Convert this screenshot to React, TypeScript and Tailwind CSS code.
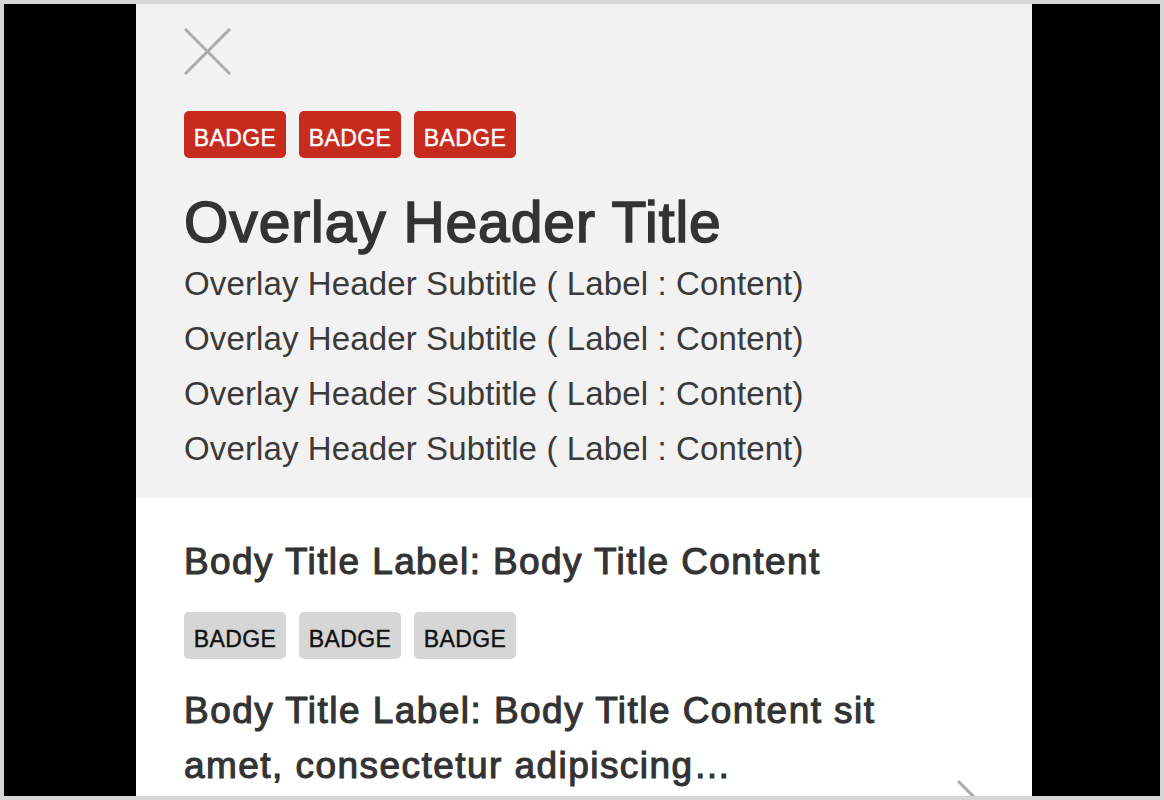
import React from "react";

const font = { fontFamily: '"Liberation Sans", Arial, Helvetica, sans-serif' };

const subtitles = [1, 2, 3, 4].map(() => "Overlay Header Subtitle ( Label : Content)");

const Badge = ({ tone }: { tone: "red" | "gray" }) => (
  <span
    className={
      tone === "red"
        ? "w-[102px] h-[47px] pt-[7px] flex items-center justify-center rounded-[5px] bg-[#c62b1d] text-white text-[23px] tracking-[0.4px] leading-none [-webkit-text-stroke:0.4px_#fff]"
        : "w-[102px] h-[47px] pt-[7px] flex items-center justify-center rounded-[5px] bg-[#d6d6d6] text-[#111] text-[23px] tracking-[0.4px] leading-none [-webkit-text-stroke:0.4px_#111]"
    }
  >
    BADGE
  </span>
);

const BadgeRow = ({ tone }: { tone: "red" | "gray" }) => (
  <div className="flex gap-[13px]">
    <Badge tone={tone} />
    <Badge tone={tone} />
    <Badge tone={tone} />
  </div>
);

const App = () => {
  return (
    <div
      className="w-[1164px] h-[800px] border-4 border-[#d6d6d6] bg-black overflow-hidden"
      style={font}
    >
      <div className="ml-[132px] w-[896px] h-full bg-white overflow-hidden">
        {/* header */}
        <div className="bg-[#f2f2f2] pl-[48px] pt-[24px] pb-[22px]">
          <button className="block w-[47px] h-[47px]">
            <svg width="47" height="47" viewBox="0 0 47 47">
              <path d="M1 1 L46 46 M46 1 L1 46" stroke="#ababab" strokeWidth="3" fill="none" />
            </svg>
          </button>
          <div className="mt-[36px]">
            <BadgeRow tone="red" />
          </div>
          <h1 className="mt-[33px] text-[57px] leading-[62px] tracking-[0.9px] text-[#333] [-webkit-text-stroke:1.6px_#333]">
            Overlay Header Title
          </h1>
          <div className="mt-[3px] text-[33px] leading-[55px] tracking-[0.12px] text-[#3a3a3a]">
            {subtitles.map((s, i) => (
              <div key={i}>{s}</div>
            ))}
          </div>
        </div>

        {/* body */}
        <div className="pl-[48px] pt-[42px]">
          <h2 className="text-[37px] leading-[44px] tracking-[1.4px] text-[#333] [-webkit-text-stroke:1.1px_#333]">
            Body Title Label: Body Title Content
          </h2>
          <div className="mt-[28px]">
            <BadgeRow tone="gray" />
          </div>
          <div className="flex mt-[24px]">
            <p className="w-[760px] text-[37px] leading-[55px] tracking-[1.45px] text-[#333] [-webkit-text-stroke:1.1px_#333]">
              Body Title Label: Body Title Content sit amet, consectetur adipiscing…
            </p>
            <svg className="ml-[12px] mt-[96px] shrink-0" width="30" height="52" viewBox="0 0 30 52">
              <path d="M2 2 L26 26 L2 50" stroke="#ababab" strokeWidth="3" fill="none" />
            </svg>
          </div>
        </div>
      </div>
    </div>
  );
};

export default App;
